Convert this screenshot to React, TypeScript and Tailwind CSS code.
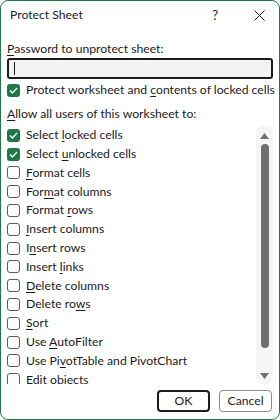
import React from 'react';

type Item = { pre: string; key: string; post: string; checked?: boolean };

const items: Item[] = [
  { pre: 'Select ', key: 'l', post: 'ocked cells', checked: true },
  { pre: 'Select ', key: 'u', post: 'nlocked cells', checked: true },
  { pre: '', key: 'F', post: 'ormat cells' },
  { pre: 'For', key: 'm', post: 'at columns' },
  { pre: 'Format ', key: 'r', post: 'ows' },
  { pre: '', key: 'I', post: 'nsert columns' },
  { pre: 'I', key: 'n', post: 'sert rows' },
  { pre: 'Insert ', key: 'l', post: 'inks' },
  { pre: '', key: 'D', post: 'elete columns' },
  { pre: 'Delete ro', key: 'w', post: 's' },
  { pre: '', key: 'S', post: 'ort' },
  { pre: 'Use ', key: 'A', post: 'utoFilter' },
  { pre: 'Use Pi', key: 'v', post: 'otTable and PivotChart' },
  { pre: 'Edit objects', key: '', post: '' },
];

const CheckBox: React.FC<{ checked?: boolean }> = ({ checked }) =>
  checked ? (
    <div className="w-[13px] h-[13px] rounded-[3px] bg-[#1d7a46] flex items-center justify-center shrink-0">
      <svg width="9" height="9" viewBox="0 0 9 9">
        <path d="M1 4.6 L3.4 7 L8 2" fill="none" stroke="white" strokeWidth="1.4" />
      </svg>
    </div>
  ) : (
    <div className="w-[13px] h-[13px] rounded-[3px] border border-[#5c5c5c] bg-white shrink-0" />
  );

const Label: React.FC<{ item: Item }> = ({ item }) => (
  <span className="whitespace-nowrap">
    {item.pre}
    {item.key && <u className="underline-offset-2">{item.key}</u>}
    {item.post}
  </span>
);

export default function App() {
  return (
    <div
      className="w-[280px] h-[420px] bg-white border border-[#1e7a46] rounded-[8px] flex flex-col text-[12.2px] text-[#1b1b1b] overflow-hidden"
      style={{ fontFamily: 'Lato, "Noto Sans", sans-serif' }}
    >
      {/* title bar */}
      <div className="h-[29px] flex items-center pl-[9px] pr-[14px] shrink-0">
        <span className="flex-1">Protect Sheet</span>
        <span className="mr-[36px] text-[13px]">?</span>
        <svg width="11" height="11" viewBox="0 0 11 11">
          <path d="M0.5 0.5 L10.5 10.5 M10.5 0.5 L0.5 10.5" stroke="#1b1b1b" strokeWidth="1" />
        </svg>
      </div>

      <div className="flex flex-col px-[6px]">
        <div className="mt-[11px] h-[16px] leading-[16px]">
          <u className="underline-offset-2">P</u>assword to unprotect sheet:
        </div>

        <div className="mt-[1px] h-[21px] rounded-[3px] border-2 border-[#1b1b1b] bg-[#f3f3f3] flex items-center pl-[5px]">
          <div className="w-[1px] h-[13px] bg-[#1b1b1b]" />
        </div>

        <div className="mt-[2px] h-[19px] flex items-center gap-[6px]">
          <CheckBox checked />
          <span className="whitespace-nowrap">
            Protect worksheet and <u className="underline-offset-2">c</u>ontents of locked cells
          </span>
        </div>

        <div className="mt-[6px] h-[16px] leading-[16px]">
          <u className="underline-offset-2">A</u>llow all users of this worksheet to:
        </div>

        <div className="mt-[4px] h-[258px] flex">
          <div className="flex-1 overflow-hidden">
            {items.map((it, i) => (
              <div key={i} className="h-[18.8px] flex items-center gap-[6px]">
                <CheckBox checked={it.checked} />
                <Label item={it} />
              </div>
            ))}
          </div>
          <div className="w-[17px] h-[258px] rounded-[6px] bg-[#f5f5f5] flex flex-col items-center pt-[7px] pb-[5px]">
            <svg width="9" height="6" viewBox="0 0 9 6" className="shrink-0">
              <path d="M4.5 0 L9 6 L0 6 Z" fill="#6f6f6f" />
            </svg>
            <div className="mt-[5px] w-[8px] h-[204px] rounded-full bg-[#6f6f6f]" />
            <div className="flex-1" />
            <svg width="9" height="6" viewBox="0 0 9 6" className="shrink-0">
              <path d="M0 0 L9 0 L4.5 6 Z" fill="#6f6f6f" />
            </svg>
          </div>
        </div>

        <div className="mt-[6px] flex justify-end gap-[9px] pr-[1px]">
          <button className="w-[53px] h-[22px] rounded-[4px] border-2 border-[#1b1b1b] bg-white flex items-center justify-center">
            OK
          </button>
          <button className="w-[53px] h-[22px] rounded-[4px] border border-[#8a8a8a] bg-white flex items-center justify-center">
            Cancel
          </button>
        </div>
      </div>
    </div>
  );
}
